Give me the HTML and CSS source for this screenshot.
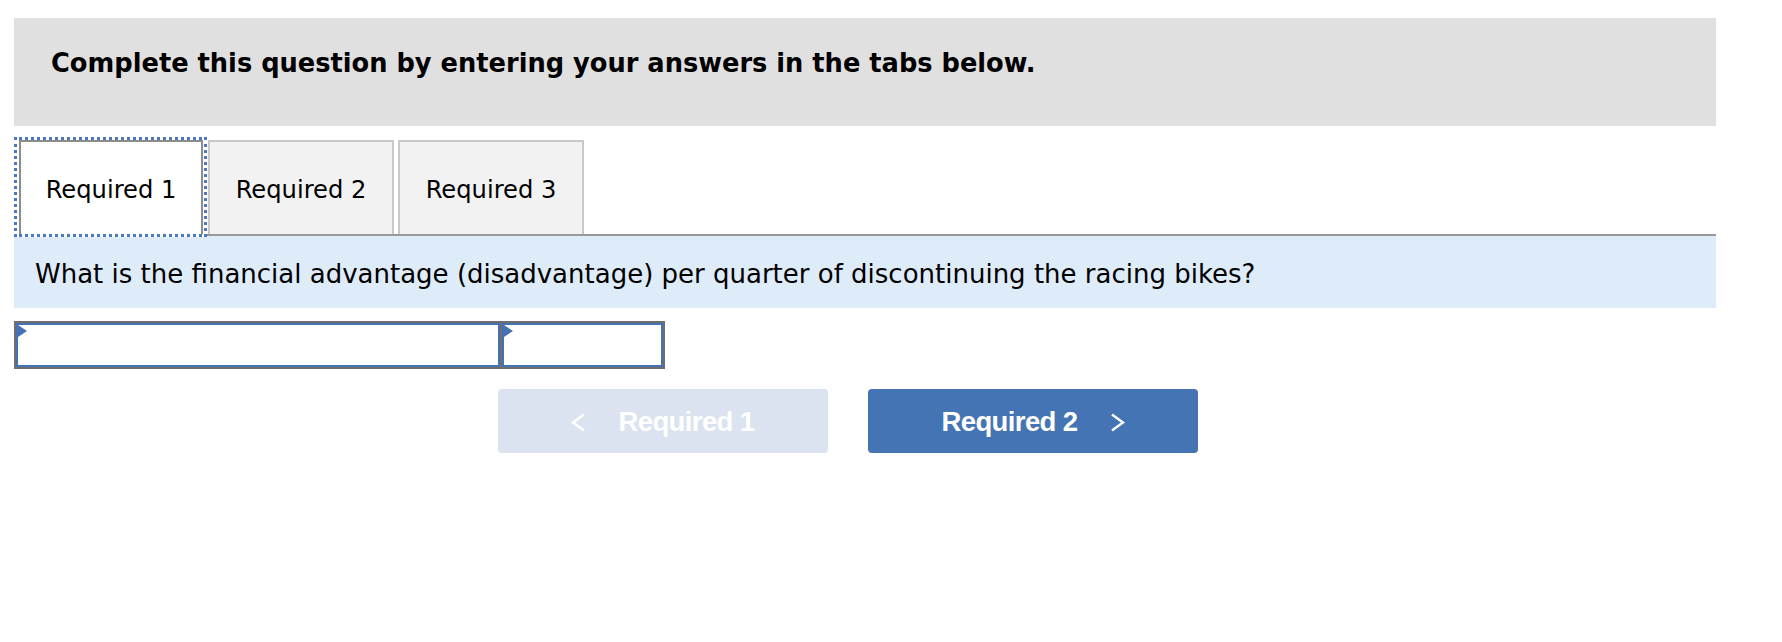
FILE: index.html
```html
<!DOCTYPE html>
<html lang="en">
<head>
<meta charset="utf-8">
<title>Required</title>
<link rel="stylesheet" href="styles.css">
</head>
<body>
<div class="page">
  <div class="instructions">Complete this question by entering your answers in the tabs below.</div>

  <div class="tabs">
    <div class="tab-focus">
      <div class="tab tab-active">Required 1</div>
    </div>
    <div class="tab tab-second">Required 2</div>
    <div class="tab tab-third">Required 3</div>
  </div>

  <div class="question">What is the financial advantage (disadvantage) per quarter of discontinuing the racing bikes?</div>

  <div class="answer-row">
    <div class="cell cell-wide"><span class="flag"></span></div>
    <div class="cell cell-narrow"><span class="flag"></span></div>
  </div>

  <div class="nav">
    <div class="btn btn-disabled">
      <svg class="chev" width="15" height="19" viewBox="0 0 15 19"><polyline points="13,1.5 2,9.5 13,17.5" fill="none" stroke="#ffffff" stroke-width="2.4"/></svg>
      <span>Required 1</span>
    </div>
    <div class="btn btn-primary">
      <span>Required 2</span>
      <svg class="chev" width="15" height="19" viewBox="0 0 15 19"><polyline points="2,1.5 13,9.5 2,17.5" fill="none" stroke="#ffffff" stroke-width="2.4"/></svg>
    </div>
  </div>
</div>
</body>
</html>
```
FILE: styles.css
```css
html, body {
  margin: 0;
  padding: 0;
  background: #ffffff;
}

.page {
  width: 1702px;
  padding: 18px 0 0 14px;
  font-family: "DejaVu Sans", Verdana, sans-serif;
  color: #000000;
}

.instructions {
  box-sizing: border-box;
  height: 108px;
  padding: 30px 0 0 37px;
  background: #e0e0e0;
  font-weight: bold;
  font-size: 25.7px;
  line-height: 30px;
}

.tabs {
  display: flex;
  align-items: flex-end;
  margin-top: 11px;
  height: 97px;
  border-bottom: 2px solid #999999;
}

.tab-focus {
  box-sizing: border-box;
  height: 100px;
  margin-bottom: -3px;
  padding: 0 1px 0 2px;
  border: 3px dotted #4a78c2;
  background: #ffffff;
}

.tab {
  box-sizing: border-box;
  width: 186px;
  height: 94px;
  display: flex;
  align-items: center;
  justify-content: center;
  padding-top: 3px;
  border: 2px solid #c8c8c8;
  border-bottom: 0;
  background: #f2f2f2;
  font-size: 24.2px;
}

.tab-active {
  width: 184px;
  height: 94px;
  border-color: #8c8c8c;
  background: #ffffff;
}

.tab-second {
  margin-left: 1px;
}

.tab-third {
  margin-left: 4px;
}

.question {
  box-sizing: border-box;
  height: 72px;
  display: flex;
  align-items: center;
  padding: 3px 0 0 21px;
  background: #deebf8;
  font-size: 26px;
}

.answer-row {
  display: flex;
  gap: 2px;
  width: 647px;
  margin-top: 13px;
  padding: 2px;
  background: #6e6e6e;
}

.cell {
  position: relative;
  box-sizing: border-box;
  height: 44px;
  border: 2px solid #4472b4;
  background: #ffffff;
}

.cell-wide {
  width: 484px;
}

.cell-narrow {
  width: 161px;
}

.flag {
  position: absolute;
  left: 0;
  top: 0;
  width: 0;
  height: 0;
  border-top: 6px solid transparent;
  border-bottom: 6px solid transparent;
  border-left: 9px solid #4472b4;
}

.nav {
  display: flex;
  gap: 40px;
  margin-top: 20px;
  padding-left: 484px;
}

.btn {
  box-sizing: border-box;
  width: 330px;
  height: 64px;
  display: flex;
  align-items: center;
  justify-content: center;
  gap: 32px;
  padding-top: 2px;
  border-radius: 4px;
  color: #ffffff;
  font-family: "Liberation Sans", Arial, sans-serif;
  font-weight: bold;
  font-size: 27.5px;
  letter-spacing: -0.6px;
}

.btn-disabled {
  background: #dae3ef;
}

.btn-primary {
  background: #4574b5;
}

.chev {
  display: block;
}
```
